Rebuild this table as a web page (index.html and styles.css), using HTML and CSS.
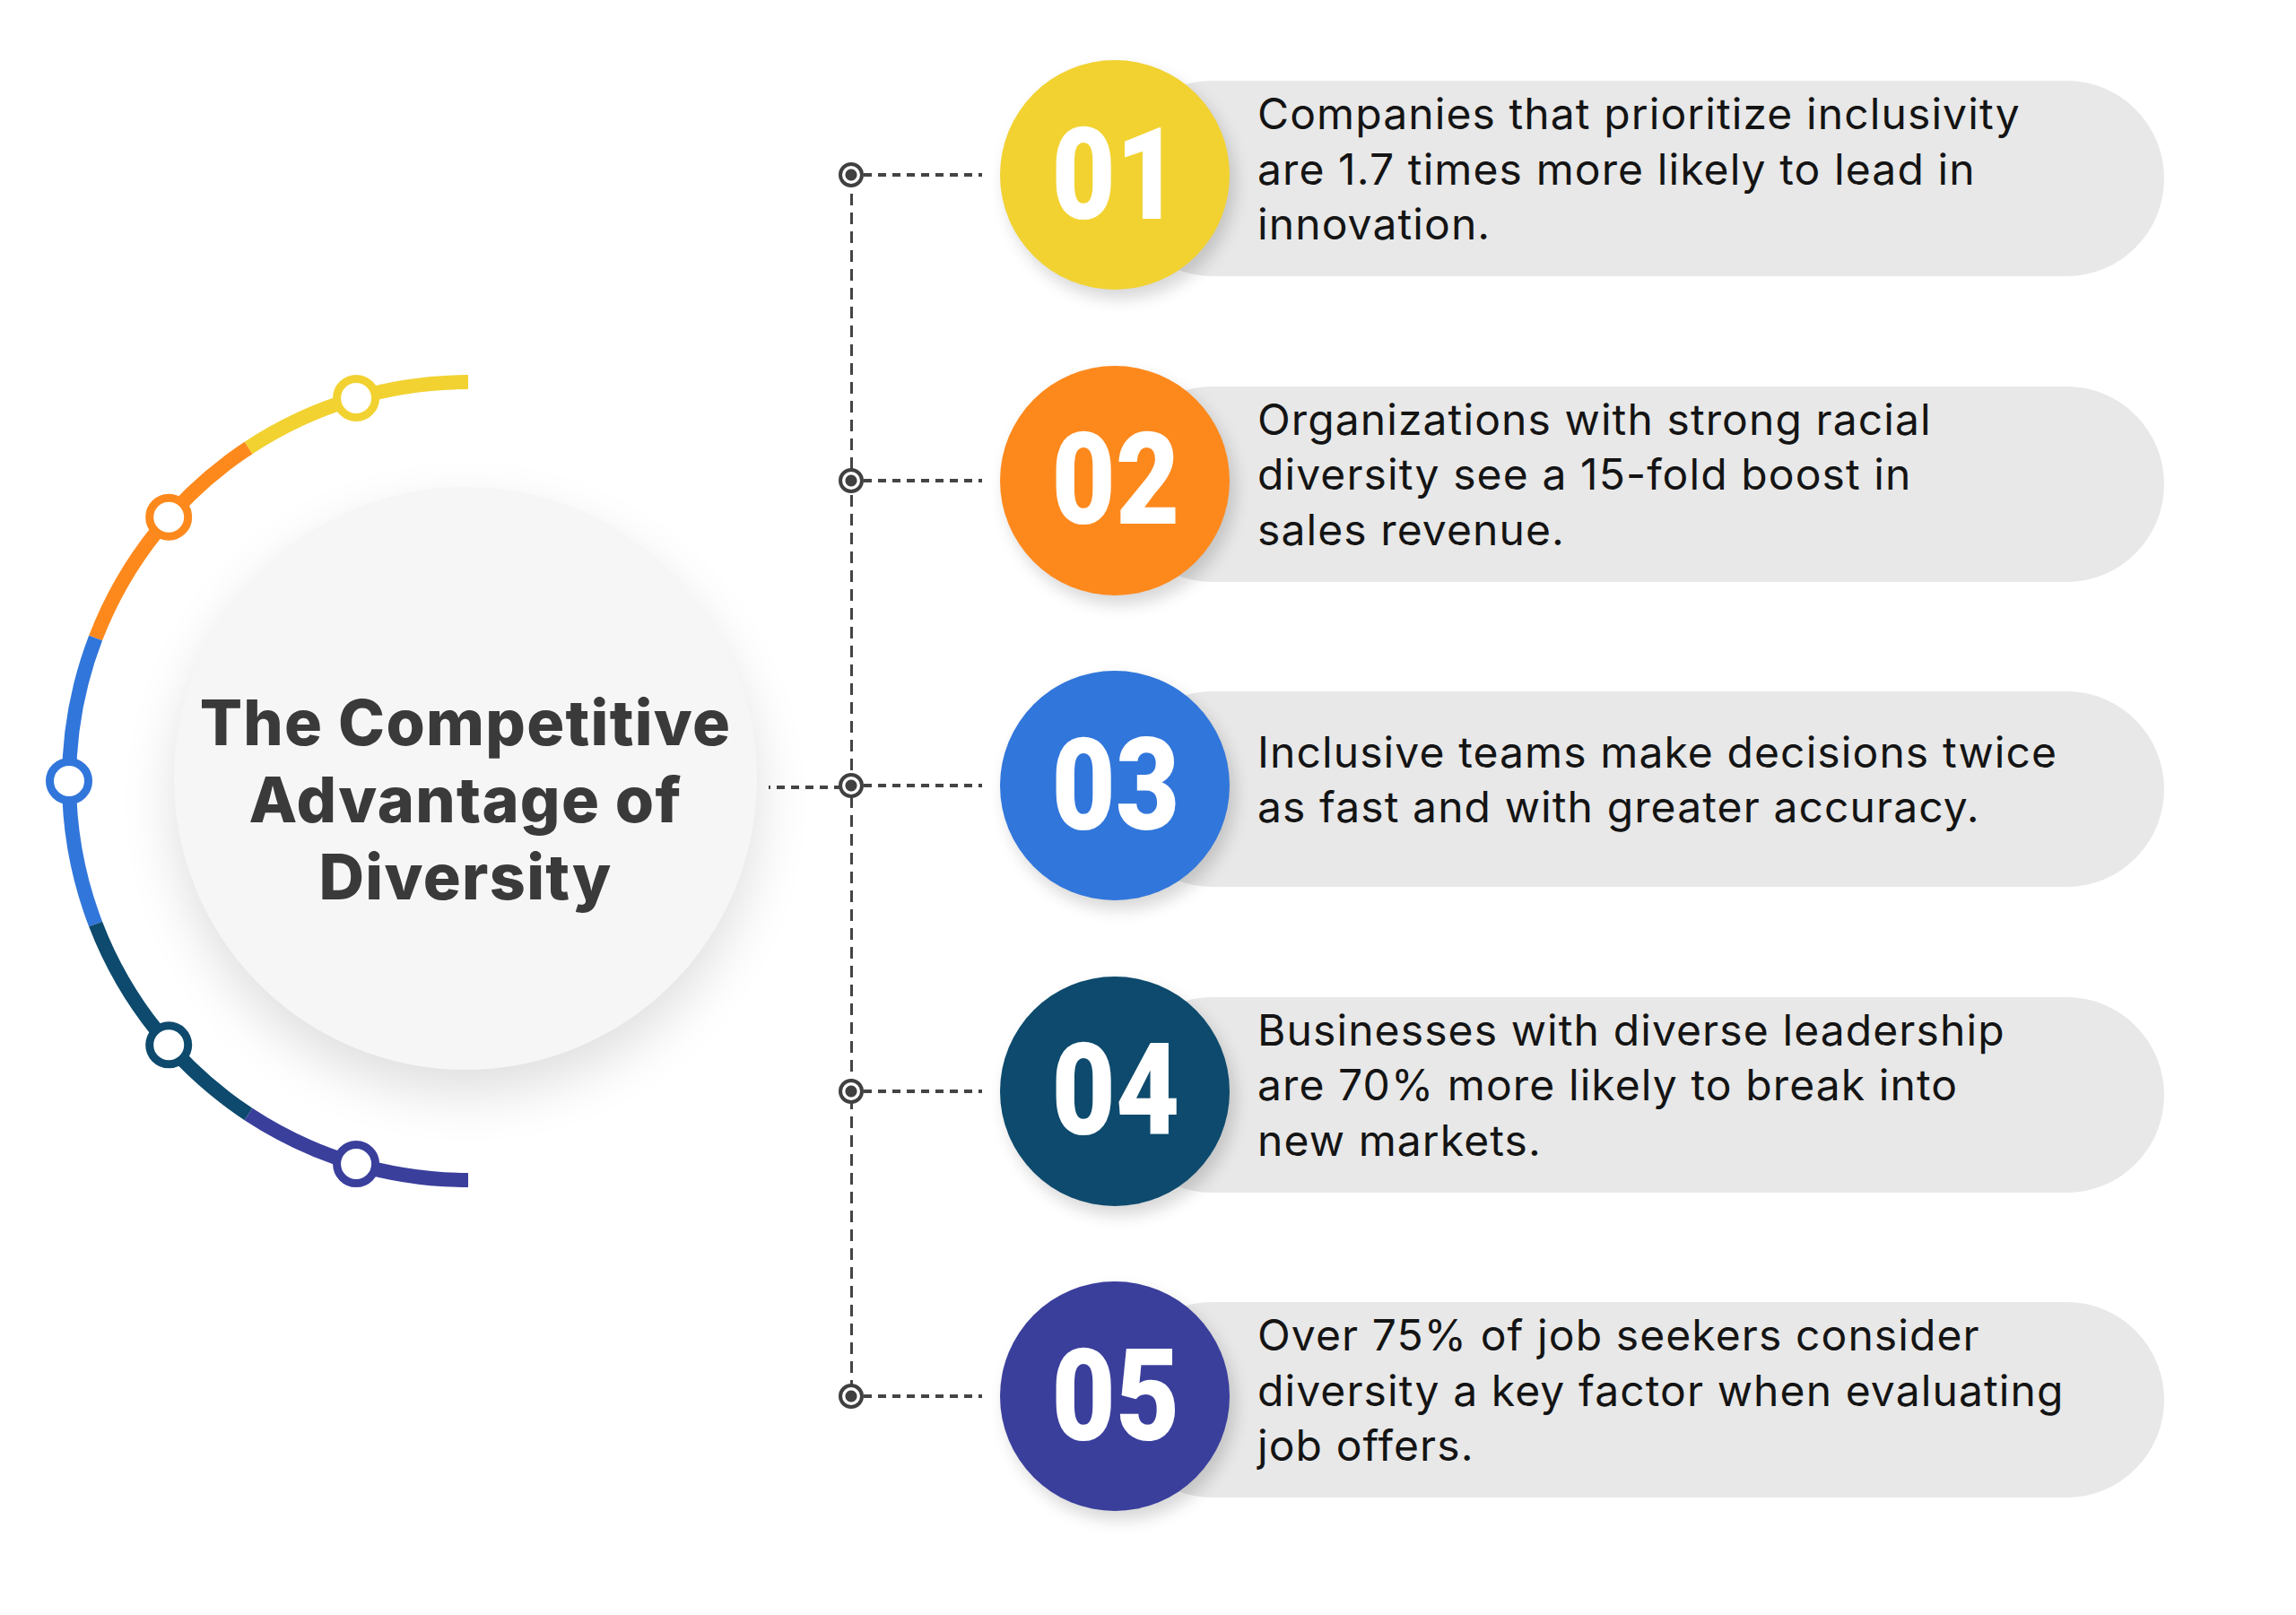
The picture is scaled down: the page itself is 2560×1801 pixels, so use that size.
FILE: index.html
```html
<!DOCTYPE html>
<html lang="en">
<head>
<meta charset="utf-8">
<title>The Competitive Advantage of Diversity</title>
<link rel="stylesheet" href="styles.css">
</head>
<body>
<main class="info">
  <section class="hub">
    <svg class="arc" viewBox="0 0 935 1801" width="935" height="1801" aria-hidden="true">
      <g fill="none" stroke-width="16" stroke-linecap="butt">
        <path d="M522 426 A445 445 0 0 0 277 499.5" stroke="#F2D231"/>
        <path d="M277 499.5 A445 445 0 0 0 106.6 711.5" stroke="#FD891D"/>
        <path d="M106.6 711.5 A445 445 0 0 0 106.6 1030.5" stroke="#3176DB"/>
        <path d="M106.6 1030.5 A445 445 0 0 0 277 1242.5" stroke="#0D4A6D"/>
        <path d="M277 1242.5 A445 445 0 0 0 522 1316" stroke="#3A3F9C"/>
      </g>
      <g fill="#fff" stroke-width="9">
        <circle cx="397.1" cy="443.9" r="21.5" stroke="#F2D231"/>
        <circle cx="188.2" cy="576.7" r="21.5" stroke="#FD891D"/>
        <circle cx="77" cy="871" r="21.5" stroke="#3176DB"/>
        <circle cx="188.2" cy="1165.3" r="21.5" stroke="#0D4A6D"/>
        <circle cx="397.1" cy="1298.1" r="21.5" stroke="#3A3F9C"/>
      </g>
    </svg>
    <div class="title-disc">
      <h1 class="title">The Competitive<br>Advantage of<br>Diversity</h1>
    </div>
  </section>

  <section class="list">
    <div class="row">
      <span class="node"></span><span class="lead"></span>
      <div class="badge badge--yellow"><span class="badge-num">01</span></div>
      <p class="pill">Companies that prioritize inclusivity<br>are 1.7 times more likely to lead in<br>innovation.</p>
    </div>
    <div class="row">
      <span class="node"></span><span class="lead"></span>
      <div class="badge badge--orange"><span class="badge-num">02</span></div>
      <p class="pill">Organizations with strong racial<br>diversity see a 15-fold boost in<br>sales revenue.</p>
    </div>
    <div class="row row--hub">
      <span class="node"></span><span class="lead"></span>
      <div class="badge badge--blue"><span class="badge-num">03</span></div>
      <p class="pill">Inclusive teams make decisions twice<br>as fast and with greater accuracy.</p>
    </div>
    <div class="row">
      <span class="node"></span><span class="lead"></span>
      <div class="badge badge--navy"><span class="badge-num">04</span></div>
      <p class="pill">Businesses with diverse leadership<br>are 70% more likely to break into<br>new markets.</p>
    </div>
    <div class="row">
      <span class="node"></span><span class="lead"></span>
      <div class="badge badge--indigo"><span class="badge-num">05</span></div>
      <p class="pill">Over 75% of job seekers consider<br>diversity a key factor when evaluating<br>job offers.</p>
    </div>
  </section>
</main>
</body>
</html>
```

FILE: styles.css
```css
html, body {
  margin: 0;
  padding: 0;
  background: #ffffff;
}

body {
  width: 2560px;
  height: 1801px;
  overflow: hidden;
  font-family: Inter, "Noto Sans", "Liberation Sans", sans-serif;
}

.info {
  display: flex;
  align-items: flex-start;
  width: 2560px;
  height: 1801px;
}

/* ---------- left hub ---------- */
.hub {
  flex: none;
  width: 935px;
  height: 1801px;
  display: grid;
}

.arc {
  grid-area: 1 / 1;
  display: block;
}

.title-disc {
  grid-area: 1 / 1;
  align-self: start;
  justify-self: start;
  margin: 543px 0 0 194px;
  width: 650px;
  height: 650px;
  box-sizing: border-box;
  padding-top: 48px;
  border-radius: 50%;
  background: #f6f6f6;
  box-shadow: 0 26px 60px rgba(0, 0, 0, 0.13);
  display: flex;
  align-items: center;
  justify-content: center;
}

.title {
  margin: 0;
  font-family: Inter, "Noto Sans", "Liberation Sans", sans-serif;
  font-weight: 800;
  font-size: 70px;
  line-height: 86px;
  color: #3a3a3a;
  text-align: center;
  letter-spacing: 1.3px;
}

/* ---------- right list ---------- */
.list {
  flex: none;
  position: relative;
  display: flex;
  flex-direction: column;
  padding-top: 25px;
}

.list::before {
  content: "";
  position: absolute;
  left: 12.5px;
  top: 195px;
  width: 3px;
  height: 1362px;
  background: repeating-linear-gradient(180deg, #444 0 13px, transparent 13px 21px);
}

.row {
  display: flex;
  align-items: center;
  height: 340.5px;
}

.node {
  flex: none;
  position: relative;
  z-index: 1;
  width: 28px;
  height: 28px;
  box-sizing: border-box;
  border: 4px solid #404040;
  border-radius: 50%;
  background: radial-gradient(circle, #404040 0 6px, #ffffff 7px);
}

.lead {
  flex: none;
  width: 132px;
  height: 4px;
  margin-right: 20px;
  background: repeating-linear-gradient(90deg, #444 0 9px, transparent 9px 16px);
}

.row--hub .node::before {
  content: "";
  position: absolute;
  right: 100%;
  top: 10px;
  width: 82px;
  height: 4px;
  background: repeating-linear-gradient(270deg, #444 0 9px, transparent 9px 16px);
}

.badge {
  flex: none;
  position: relative;
  z-index: 1;
  width: 256px;
  height: 256px;
  border-radius: 50%;
  display: flex;
  align-items: center;
  justify-content: center;
  box-shadow: 6px 10px 18px rgba(0, 0, 0, 0.16);
}

.badge--yellow { background: #F2D231; }
.badge--orange { background: #FD891D; }
.badge--blue   { background: #3176DB; }
.badge--navy   { background: #0D4A6D; }
.badge--indigo { background: #3A3F9C; }

.badge-num {
  display: inline-block;
  font-family: Roboto, "Liberation Sans", sans-serif;
  font-weight: 900;
  font-size: 143px;
  line-height: 1;
  color: #ffffff;
  transform: scaleX(0.86);
  margin-left: 2px;
}

.pill {
  flex: none;
  margin: 8px 0 0 -128px;
  width: 1170px;
  height: 218px;
  box-sizing: border-box;
  padding: 0 0 22px 159px;
  border-radius: 109px;
  background: #e8e8e8;
  display: flex;
  align-items: center;
  font-family: Inter, "Noto Sans", "Liberation Sans", sans-serif;
  font-weight: 400;
  font-size: 48px;
  line-height: 61.5px;
  letter-spacing: 1.1px;
  color: #141414;
}
```
